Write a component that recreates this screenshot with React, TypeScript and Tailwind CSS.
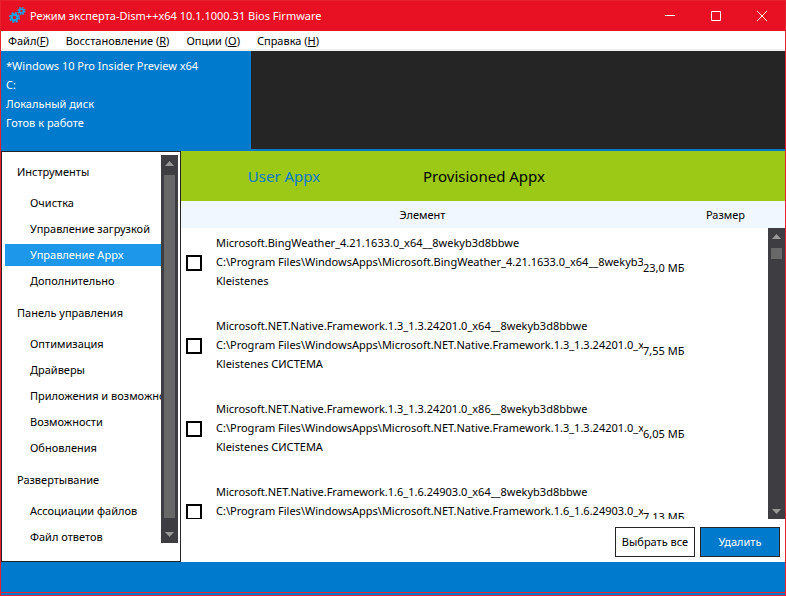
import { useState } from 'react';

const menus = [
  { label: 'Файл', key: 'F', tight: true },
  { label: 'Восстановление', key: 'R' },
  { label: 'Опции', key: 'O' },
  { label: 'Справка', key: 'H' },
];

const groups = [
  {
    title: 'Инструменты',
    items: ['Очистка', 'Управление загрузкой', 'Управление Appx', 'Дополнительно'],
  },
  {
    title: 'Панель управления',
    items: ['Оптимизация', 'Драйверы', 'Приложения и возможности', 'Возможности', 'Обновления'],
  },
  { title: 'Развертывание', items: ['Ассоциации файлов', 'Файл ответов'] },
];

const packages = [
  { name: 'Microsoft.BingWeather_4.21.1633.0_x64__8wekyb3d8bbwe', users: 'Kleistenes', size: '23,0 МБ' },
  { name: 'Microsoft.NET.Native.Framework.1.3_1.3.24201.0_x64__8wekyb3d8bbwe', users: 'Kleistenes СИСТЕМА', size: '7,55 МБ' },
  { name: 'Microsoft.NET.Native.Framework.1.3_1.3.24201.0_x86__8wekyb3d8bbwe', users: 'Kleistenes СИСТЕМА', size: '6,05 МБ' },
  { name: 'Microsoft.NET.Native.Framework.1.6_1.6.24903.0_x64__8wekyb3d8bbwe', users: 'Kleistenes СИСТЕМА', size: '7,13 МБ' },
];

function GearsIcon() {
  return (
    <svg width="18" height="18" viewBox="0 0 18 18" fill="none" stroke="#16a5e6">
      <circle cx="5.5" cy="10.5" r="2.8" strokeWidth="2.2" />
      <circle cx="5.5" cy="10.5" r="4.5" strokeWidth="2" strokeDasharray="2 1.534" />
      <circle cx="12.5" cy="4" r="2" strokeWidth="1.7" />
      <circle cx="12.5" cy="4" r="3.3" strokeWidth="1.5" strokeDasharray="1.5 1.092" />
    </svg>
  );
}

function Arrow({ down = false }: { down?: boolean }) {
  return (
    <svg width="9" height="5" viewBox="0 0 9 5" fill="#999" className="shrink-0">
      <path d={down ? 'M0 0h9L4.5 5z' : 'M0 5h9L4.5 0z'} />
    </svg>
  );
}

function Scrollbar({ full = false }: { full?: boolean }) {
  return (
    <div className="flex w-[17px] min-h-0 flex-1 flex-col items-center bg-[#3e3e42]">
      <div className="flex h-5 items-start pt-1.5">
        <Arrow />
      </div>
      <div className={full ? 'w-[11px] flex-1 bg-[#686868]' : 'h-[11px] w-[11px] bg-[#686868]'} />
      <div className={full ? 'flex h-[25px] items-center pt-2' : 'mt-auto flex h-4 items-center'}>
        <Arrow down />
      </div>
    </div>
  );
}

function TitleBar() {
  return (
    <header className="flex h-[30px] shrink-0 items-center bg-[#e81123] text-white">
      <div className="flex flex-1 items-center gap-[3px] pl-2">
        <GearsIcon />
        <h1>Режим эксперта-Dism++x64 10.1.1000.31 Bios Firmware</h1>
      </div>
      <button aria-label="Свернуть" className="flex h-full w-[46px] items-center justify-center">
        <svg width="10" height="10" stroke="currentColor">
          <path d="M0 4.5h10" />
        </svg>
      </button>
      <button aria-label="Развернуть" className="flex h-full w-[46px] items-center justify-center">
        <svg width="10" height="10" fill="none" stroke="currentColor">
          <path d="M.5.5h9v9h-9z" />
        </svg>
      </button>
      <button aria-label="Закрыть" className="flex h-full w-[46px] items-center justify-center">
        <svg width="10" height="10" stroke="currentColor">
          <path d="M0 0l10 10M10 0L0 10" />
        </svg>
      </button>
    </header>
  );
}

function Sidebar({ active, onSelect }: { active: string; onSelect: (item: string) => void }) {
  return (
    <aside className="flex w-[180px] shrink-0 border border-[#252526] bg-white pb-[18px] pl-[3px] pr-0.5 pt-[3px]">
      <nav className="min-w-0 flex-1 overflow-hidden">
        <div className="-mt-0.5">
          {groups.map((group) => (
            <section key={group.title}>
              <h2 className="h-[37px] pl-3 leading-[37px]">{group.title}</h2>
              <div className="flex flex-col gap-1 py-0.5">
                {group.items.map((item) => (
                  <button
                    key={item}
                    onClick={() => onSelect(item)}
                    className={`h-[22px] overflow-hidden whitespace-nowrap pl-[25px] text-left leading-[22px] ${
                      item === active ? 'bg-[#1c97ea] text-white' : ''
                    }`}
                  >
                    {item}
                  </button>
                ))}
              </div>
            </section>
          ))}
        </div>
      </nav>
      <div className="flex">
        <Scrollbar full />
      </div>
    </aside>
  );
}

function PackageTable() {
  return (
    <div className="flex min-h-0 flex-1">
      <div className="min-w-0 flex-1 overflow-hidden">
        <table className="w-full table-fixed">
          <thead>
            <tr className="h-[27px] bg-[#f0f7ff]">
              <th className="w-[35px]" />
              <th className="pr-[14px] font-normal">Элемент</th>
              <th className="w-[125px] pl-10 font-normal">Размер</th>
            </tr>
          </thead>
          <tbody>
            {packages.map((pkg) => (
              <tr key={pkg.name} className="h-[83px] align-top">
                <td className="pl-[5px] pt-[27px]">
                  <input
                    type="checkbox"
                    aria-label={pkg.name}
                    className="block size-4 appearance-none border-2 border-black bg-white checked:bg-[#007acc]"
                  />
                </td>
                <td className="overflow-hidden whitespace-nowrap pt-[5px] leading-[19px]">
                  <p>{pkg.name}</p>
                  <p>C:\Program Files\WindowsApps\{pkg.name}</p>
                  <p>{pkg.users}</p>
                </td>
                <td className="pt-[30px] leading-[19px]">{pkg.size}</td>
              </tr>
            ))}
          </tbody>
        </table>
      </div>
      <div className="flex flex-col">
        <div className="h-[27px] bg-[#f0f7ff]" />
        <Scrollbar />
      </div>
    </div>
  );
}

export default function App() {
  const [section, setSection] = useState('Управление Appx');
  const [tab, setTab] = useState('User Appx');

  return (
    <div className="flex h-screen flex-col overflow-hidden border border-[#e8212f] bg-[#007acc] font-['Noto_Sans','Open_Sans',sans-serif] text-[11px] leading-4 text-black">
      <TitleBar />
      <nav className="flex h-5 shrink-0 items-end gap-[17px] border-b-2 border-[#f0f0f0] bg-white pl-[7px]">
        {menus.map((menu) => (
          <button key={menu.key}>
            {menu.label}
            {menu.tight ? '' : ' '}(<u>{menu.key}</u>)
          </button>
        ))}
      </nav>

      <div className="mb-0.5 flex h-[98px] shrink-0 bg-[#252526]">
        <div className="w-[250px] bg-[#007acc] pl-[5px] pt-[5px] leading-[19px] text-white">
          <p>*Windows 10 Pro Insider Preview x64</p>
          <p>C:</p>
          <p>Локальный диск</p>
          <p>Готов к работе</p>
        </div>
      </div>

      <div className="flex min-h-0 flex-1">
        <Sidebar active={section} onSelect={setSection} />
        <main className="flex min-w-0 flex-1 flex-col bg-white">
          <div role="tablist" className="flex h-[50px] shrink-0 bg-[#9bc916] pl-[3px] text-[15px]">
            {['User Appx', 'Provisioned Appx'].map((name) => (
              <button
                key={name}
                role="tab"
                aria-selected={tab === name}
                onClick={() => setTab(name)}
                className={`w-[200px] ${tab === name ? 'text-[#007acc]' : ''}`}
              >
                {name}
              </button>
            ))}
          </div>
          <PackageTable />
          <div className="flex shrink-0 justify-end gap-[5px] pb-[5px] pr-[5px] pt-2">
            <button className="h-[30px] w-20 border border-[#252526] bg-white">Выбрать все</button>
            <button className="h-[30px] w-20 border border-[#252526] bg-[#007acc] text-white">Удалить</button>
          </div>
        </main>
      </div>

      <footer className="mb-0.5 h-[31px] shrink-0 border-b border-[#e8212f]" />
    </div>
  );
}
